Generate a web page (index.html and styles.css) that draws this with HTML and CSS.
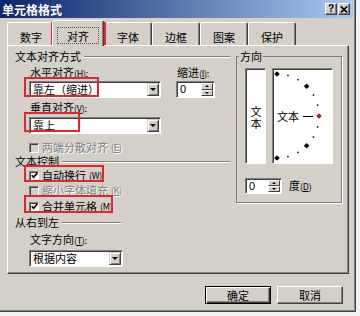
FILE: index.html
```html
<!DOCTYPE html>
<html lang="zh-CN">
<head>
    <meta charset="UTF-8">
    <meta name="viewport" content="width=device-width, initial-scale=1.0">
    <title>单元格格式</title>
    <link rel="stylesheet" href="styles.css">
</head>
<body>
    <div class="dialog">
        <div class="titlebar">
            <span class="title">单元格格式</span>
            <div class="title-btns">
                <span class="tbtn">?</span>
                <span class="tbtn">
                    <svg width="8" height="7" viewBox="0 0 8 7"><path d="M0.8 0.5 L7.2 6.5 M7.2 0.5 L0.8 6.5" stroke="#000" stroke-width="1.7"/></svg>
                </span>
            </div>
        </div>

        <div class="body">
            <div class="tabs">
                <span class="tab">数字</span>
                <span class="tab active"><span class="focus">对齐</span></span>
                <span class="tab">字体</span>
                <span class="tab">边框</span>
                <span class="tab">图案</span>
                <span class="tab">保护</span>
            </div>

            <div class="panel">
                <div class="left-col">
                    <div class="group-head"><span>文本对齐方式</span><i class="rule"></i></div>
                    <div class="indent">
                        <div class="h-row">
                            <div>
                                <div class="label">水平对齐<span class="key">(<u>H</u>):</span></div>
                                <div class="combo combo-wide">
                                    <span class="combo-val">靠左（缩进）</span>
                                    <span class="combo-btn"><i class="tri-down"></i></span>
                                </div>
                            </div>
                            <div>
                                <div class="label">缩进<span class="key">(<u>I</u>):</span></div>
                                <div class="spin spin-indent">
                                    <span class="spin-val">0</span>
                                    <span class="spin-btns">
                                        <span class="spin-btn"><i class="tri-up small"></i></span>
                                        <span class="spin-btn"><i class="tri-down small"></i></span>
                                    </span>
                                </div>
                            </div>
                        </div>
                        <div class="label label-v">垂直对齐<span class="key">(<u>V</u>):</span></div>
                        <div class="combo combo-wide">
                            <span class="combo-val">靠上</span>
                            <span class="combo-btn"><i class="tri-down"></i></span>
                        </div>
                        <div class="check disabled check-first"><span class="box"></span>两端分散对齐<span class="key">(<u>E</u>)</span></div>
                    </div>

                    <div class="group-head head-ctrl"><span>文本控制</span><i class="rule"></i></div>
                    <div class="indent">
                        <div class="check check-wrap">
                            <span class="box"><svg width="7" height="7" viewBox="0 0 7 7"><polyline points="0.8,3.2 2.6,5.2 6.3,1" fill="none" stroke="#000" stroke-width="1.7"/></svg></span>自动换行<span class="key">(<u>W</u>)</span>
                        </div>
                        <div class="check disabled check-shrink"><span class="box"></span>缩小字体填充<span class="key">(<u>K</u>)</span></div>
                        <div class="check check-merge">
                            <span class="box"><svg width="7" height="7" viewBox="0 0 7 7"><polyline points="0.8,3.2 2.6,5.2 6.3,1" fill="none" stroke="#000" stroke-width="1.7"/></svg></span>合并单元格<span class="key">(<u>M</u>)</span>
                        </div>
                    </div>

                    <div class="group-head head-rtl short"><span>从右到左</span><i class="rule"></i></div>
                    <div class="indent">
                        <div class="label label-dir">文字方向<span class="key">(<u>T</u>):</span></div>
                        <div class="combo combo-dir">
                            <span class="combo-val">根据内容</span>
                            <span class="combo-btn"><i class="tri-down"></i></span>
                        </div>
                    </div>
                </div>

                <fieldset class="orient">
                    <legend>方向</legend>
                    <div class="orient-row">
                        <div class="orient-box vert"><span class="vert-text">文本</span></div>
                        <div class="orient-box dial">
                            <svg class="dial-svg" width="59" height="94" viewBox="0 0 59 94">
                                <polygon points="4,2.2 6.8,5 4,7.8 1.2,5" fill="#000"/>
                                <rect x="14.2" y="5.7" width="1.5" height="1.5" fill="#000"/>
                                <rect x="24.3" y="9.9" width="1.5" height="1.5" fill="#000"/>
                                <polygon points="33.7,14.5 36.5,17.3 33.7,20.1 30.9,17.3" fill="#000"/>
                                <rect x="39.7" y="25.3" width="1.5" height="1.5" fill="#000"/>
                                <rect x="43.9" y="35.4" width="1.5" height="1.5" fill="#000"/>
                                <line x1="30" y1="47.5" x2="40" y2="47.5" stroke="#000" stroke-width="1"/>
                                <polygon points="46,44.2 48.8,47 46,49.8 43.2,47" fill="#c0101c"/>
                                <rect x="43.9" y="57.2" width="1.5" height="1.5" fill="#000"/>
                                <rect x="39.7" y="67.3" width="1.5" height="1.5" fill="#000"/>
                                <polygon points="33.7,73.9 36.5,76.7 33.7,79.5 30.9,76.7" fill="#000"/>
                                <rect x="24.3" y="82.7" width="1.5" height="1.5" fill="#000"/>
                                <rect x="14.2" y="86.9" width="1.5" height="1.5" fill="#000"/>
                                <polygon points="4,86.2 6.8,89 4,91.8 1.2,89" fill="#000"/>
                            </svg>
                            <span class="dial-text">文本</span>
                        </div>
                    </div>
                    <div class="deg-row">
                        <div class="spin spin-deg">
                            <span class="spin-val">0</span>
                            <span class="spin-btns">
                                <span class="spin-btn"><i class="tri-up small"></i></span>
                                <span class="spin-btn"><i class="tri-down small"></i></span>
                            </span>
                        </div>
                        <span>度<span class="key">(<u>D</u>)</span></span>
                    </div>
                </fieldset>
            </div>

            <div class="actions">
                <button class="btn default">确定</button>
                <button class="btn">取消</button>
            </div>
        </div>

        <!-- red annotation frames -->
        <span class="mark mark-tab"></span>
        <span class="mark mark-h"></span>
        <span class="mark mark-v"></span>
        <span class="mark mark-wrap"></span>
        <span class="mark mark-merge"></span>
    </div>
</body>
</html>
```

FILE: styles.css
```css
* {
    box-sizing: border-box;
}
body {
    margin: 0;
    background: #f2f2f2;
    font-family: "Noto Sans CJK SC", "Liberation Sans", sans-serif;
    font-size: 11px;
    line-height: 13px;
    color: #000;
}
u {
    text-decoration: underline;
}
.key {
    font-size: 9px;
    letter-spacing: -0.3px;
}
.dialog {
    position: relative;
    width: 356px;
    height: 312px;
    background: #d4d0c8;
    border-right: 1px solid #404040;
    border-bottom: 1px solid #404040;
    box-shadow: inset -1px -1px 0 #808080;
}
.titlebar {
    height: 18px;
    margin-right: 2px;
    padding: 0 3px 0 2px;
    display: flex;
    align-items: center;
    justify-content: space-between;
    background: linear-gradient(to right, #0a246a, #a6caf0);
}
.title {
    color: #fff;
    font-weight: bold;
    font-size: 12px;
}
.title-btns {
    display: flex;
    gap: 1px;
}
.tbtn {
    width: 12px;
    height: 12px;
    display: flex;
    align-items: center;
    justify-content: center;
    background: #d4d0c8;
    border: 1px solid;
    border-color: #fff #404040 #404040 #fff;
    box-shadow: inset -1px -1px 0 #808080;
    font: bold 10px/1 "Liberation Sans", sans-serif;
}

.body {
    padding: 0 6px 0 7px;
}
.tabs {
    display: flex;
    align-items: flex-end;
    height: 25px;
    margin-top: 2px;
}
.tab {
    width: 48px;
    height: 23px;
    padding-top: 8px;
    text-align: center;
    border: 1px solid;
    border-bottom: none;
    border-color: #fff #404040 transparent #fff;
    box-shadow: inset -1px 0 0 #808080;
    border-radius: 2px 2px 0 0;
}
.tab.active {
    position: relative;
    z-index: 1;
    width: 52px;
    height: 26px;
    margin: 0 0 -1px -3px;
    padding-top: 6px;
    background: #d4d0c8;
}
.focus {
    display: inline-block;
    width: 42px;
    height: 17px;
    padding-top: 2px;
    border: 1px dotted #505050;
}

.panel {
    display: flex;
    align-items: flex-start;
    gap: 6px;
    height: 229px;
    padding: 4px 0 0 7px;
    border: 1px solid;
    border-color: #fff #404040 #404040 #fff;
    box-shadow: inset -1px -1px 0 #808080;
}
.left-col {
    width: 215px;
}
.group-head {
    display: flex;
    align-items: center;
    height: 13px;
}
.group-head.short {
    width: 106px;
}
.rule {
    flex: 1;
    height: 2px;
    margin-left: 3px;
    border-top: 1px solid #808080;
    border-bottom: 1px solid #fff;
}
.head-ctrl {
    margin-top: 1px;
}
.head-rtl {
    margin-top: 3px;
}
.indent {
    padding-left: 14px;
}
.h-row {
    display: flex;
    gap: 15px;
}
.label {
    margin-top: 3px;
    padding-left: 1px;
}
.label-dir {
    margin-top: 4px;
}

.combo {
    display: flex;
    height: 17px;
    margin-top: 1px;
    padding: 1px;
    background: #fff;
    border: 1px solid;
    border-color: #808080 #fff #fff #808080;
    box-shadow: inset 1px 1px 0 #404040;
}
.label-v + .combo {
    margin-top: 2px;
}
.combo-wide {
    width: 132px;
}
.combo-dir {
    width: 94px;
    margin-top: 3px;
}
.combo-val {
    flex: 1;
    padding-left: 2px;
    line-height: 13px;
}
.combo-btn {
    width: 12px;
    display: flex;
    align-items: center;
    justify-content: center;
    background: #d4d0c8;
    border: 1px solid;
    border-color: #d4d0c8 #404040 #404040 #d4d0c8;
    box-shadow: inset 1px 1px 0 #fff, inset -1px -1px 0 #808080;
}
.tri-down {
    width: 0;
    height: 0;
    border-left: 3px solid transparent;
    border-right: 3px solid transparent;
    border-top: 3px solid #000;
}
.tri-up {
    width: 0;
    height: 0;
    border-left: 3px solid transparent;
    border-right: 3px solid transparent;
    border-bottom: 3px solid #000;
}
.tri-up.small,
.tri-down.small {
    border-left-width: 2px;
    border-right-width: 2px;
    border-top-width: 2px;
    border-bottom-width: 2px;
}
.tri-up.small {
    border-top: none;
}
.tri-down.small {
    border-bottom: none;
}

.spin {
    display: flex;
    height: 17px;
    margin-top: 1px;
    padding: 1px;
    background: #fff;
    border: 1px solid;
    border-color: #808080 #fff #fff #808080;
    box-shadow: inset 1px 1px 0 #404040;
}
.spin-indent {
    width: 39px;
}
.spin-deg {
    width: 37px;
    height: 16px;
    margin-top: 0;
}
.spin-val {
    flex: 1;
    padding-left: 2px;
    line-height: 13px;
    font-family: "Liberation Sans", sans-serif;
}
.spin-btns {
    width: 12px;
    display: flex;
    flex-direction: column;
}
.spin-btn {
    flex: 1;
    display: flex;
    align-items: center;
    justify-content: center;
    background: #d4d0c8;
    border: 1px solid;
    border-color: #fff #404040 #404040 #fff;
}

.check {
    display: flex;
    align-items: center;
    gap: 3px;
    height: 13px;
}
.check-first {
    margin-top: 7px;
}
.check-wrap {
    margin-top: 1px;
}
.check-shrink {
    margin-top: 2px;
}
.check-merge {
    margin-top: 3px;
}
.box {
    width: 10px;
    height: 10px;
    display: flex;
    align-items: center;
    justify-content: center;
    background: #fff;
    border: 1px solid;
    border-color: #808080 #fff #fff #808080;
    box-shadow: inset 1px 1px 0 #404040;
}
.check.disabled {
    color: #808080;
    text-shadow: 1px 1px 0 #fff;
}
.check.disabled .box {
    background: #d4d0c8;
}

.orient {
    width: 106px;
    margin: 0;
    padding: 5px 7px 8px 8px;
    min-width: 0;
    border: 1px solid #808080;
    box-shadow: 1px 1px 0 #fff;
}
.orient legend {
    margin-left: -6px;
    padding: 0 1px;
    line-height: 13px;
    background: #d4d0c8;
}
.orient-row {
    display: flex;
    gap: 6px;
}
.orient-box {
    position: relative;
    height: 96px;
    background: #fff;
    border: 1px solid;
    border-color: #808080 #fff #fff #808080;
    box-shadow: inset 1px 1px 0 #404040;
}
.vert {
    width: 21px;
    display: flex;
    align-items: center;
    justify-content: center;
}
.vert-text {
    writing-mode: vertical-rl;
    text-orientation: upright;
    letter-spacing: 1px;
    margin-top: 4px;
}
.dial {
    width: 61px;
}
.dial-svg {
    position: absolute;
    left: 0;
    top: 0;
}
.dial-text {
    position: absolute;
    left: 4px;
    top: 41px;
}
.deg-row {
    display: flex;
    align-items: center;
    gap: 7px;
    margin-top: 14px;
}

.actions {
    display: flex;
    justify-content: flex-end;
    gap: 6px;
    margin-top: 12px;
    padding-right: 6px;
}
.btn {
    width: 66px;
    height: 18px;
    padding: 0;
    font: inherit;
    color: #000;
    background: #d4d0c8;
    border: 1px solid;
    border-color: #fff #404040 #404040 #fff;
    box-shadow: inset -1px -1px 0 #808080;
}
.btn.default {
    border-color: #000;
    box-shadow: inset 1px 1px 0 #fff, inset -1px -1px 0 #404040, inset -2px -2px 0 #808080;
}

.mark {
    position: absolute;
    border: 2px solid #e3262b;
}
.mark-tab {
    left: 51px;
    top: 22px;
    width: 55px;
    height: 23px;
}
.mark-h {
    left: 24px;
    top: 77px;
    width: 75px;
    height: 20px;
}
.mark-v {
    left: 24px;
    top: 112px;
    width: 56px;
    height: 20px;
}
.mark-wrap {
    left: 24px;
    top: 165px;
    width: 80px;
    height: 17px;
}
.mark-merge {
    left: 24px;
    top: 195px;
    width: 89px;
    height: 18px;
}
```
